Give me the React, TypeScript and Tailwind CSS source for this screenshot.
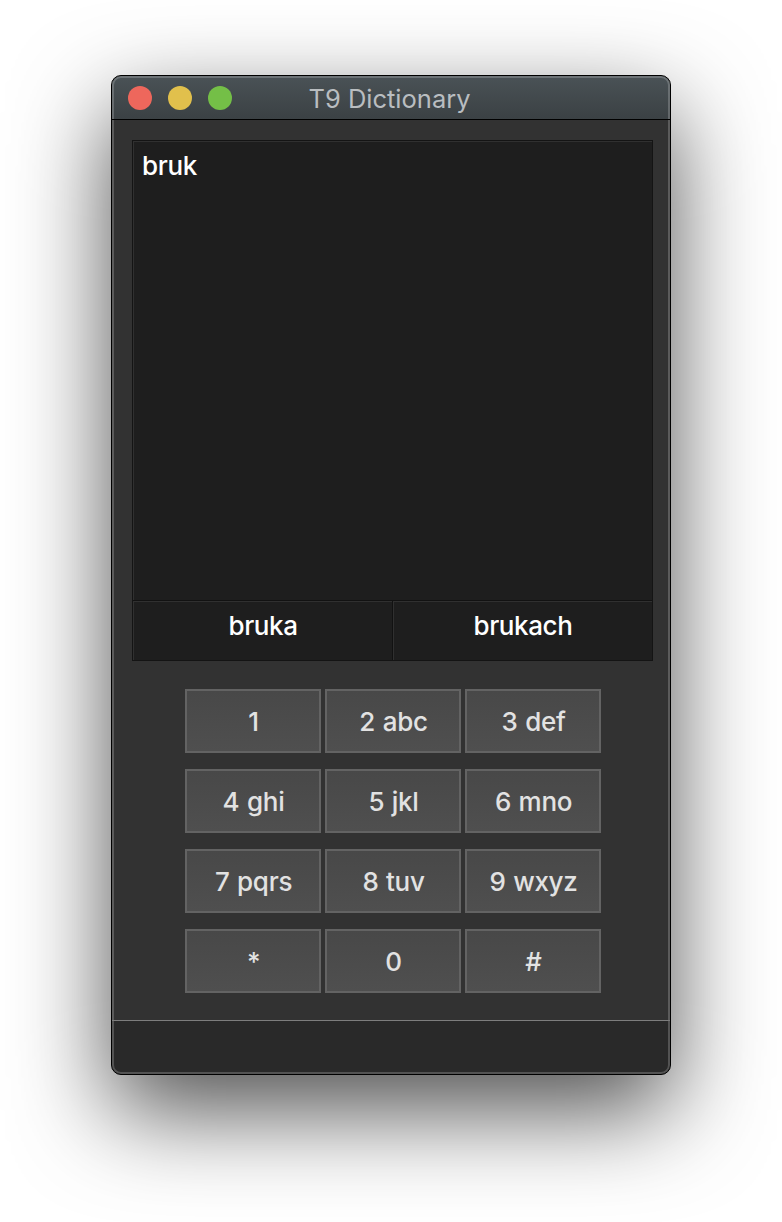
import React from "react";

const keys = [
  "1", "2 abc", "3 def",
  "4 ghi", "5 jkl", "6 mno",
  "7 pqrs", "8 tuv", "9 wxyz",
  "*", "0", "#",
];

function TitleBar() {
  return (
    <header className="relative flex h-[43px] shrink-0 items-center justify-center bg-linear-to-b from-[#4a5256] to-[#3b4144]">
      <div className="absolute left-4 top-[10px] flex gap-4">
        <span className="size-6 rounded-full bg-[#ee675c]" />
        <span className="size-6 rounded-full bg-[#e1c04c]" />
        <span className="size-6 rounded-full bg-[#74bf47]" />
      </div>
      <h1 className="pt-[3px] pr-[3px] text-[25.5px] leading-[30px] font-normal text-[#b9bdc0]">
        T9 Dictionary
      </h1>
    </header>
  );
}

function Suggestion({ word }: { word: string }) {
  return (
    <button className="flex h-[59px] flex-1 justify-center border-t border-l border-[#303030] pt-[9px] text-[26px] leading-[30px] font-medium tracking-[-0.4px] text-white">
      {word}
    </button>
  );
}

export default function App() {
  return (
    <main className="flex h-[1222px] w-[782px] items-start overflow-hidden bg-white pt-[75px] pl-[111px] font-['Inter',sans-serif]">
      <section className="relative flex h-[1000px] w-[560px] flex-col overflow-hidden rounded-[10px] border border-black bg-[#323232] shadow-[0_36px_96px_rgba(0,0,0,0.69)]">
        <TitleBar />
        <div className="z-10 h-px shrink-0 bg-black" />
        <div className="flex flex-1 flex-col items-center pt-5">
          <div className="ml-[3px] flex h-[521px] w-[521px] shrink-0 flex-col border border-[#141414] bg-[#1e1e1e]">
            <div className="flex-1 border-t border-l border-[#303030] px-2 pt-[9px] text-[26px] leading-[30px] font-medium tracking-[-0.3px] text-white">
              bruk
            </div>
            <div className="flex border-t border-[#121212]">
              <Suggestion word="bruka" />
              <div className="w-px bg-[#121212]" />
              <Suggestion word="brukach" />
            </div>
          </div>
          <div className="mt-7 ml-1 grid grid-cols-[repeat(3,136px)] gap-x-1 gap-y-4">
            {keys.map((label) => (
              <button
                key={label}
                className="flex h-16 items-center justify-center border-2 border-[#636363] bg-linear-to-b from-[#484848] to-[#4f4f4f] pt-[2px] pl-px text-[26px] leading-[30px] font-medium tracking-[-0.3px] [word-spacing:1px] text-[#e2e2e2]"
              >
                {label}
              </button>
            ))}
          </div>
        </div>
        <div className="z-10 h-px shrink-0 bg-[#7d7d7d]" />
        <footer className="h-[53px] shrink-0 bg-[#292929]" />
        <div className="pointer-events-none absolute inset-0 rounded-[9px] border-2 border-white/20" />
      </section>
    </main>
  );
}
